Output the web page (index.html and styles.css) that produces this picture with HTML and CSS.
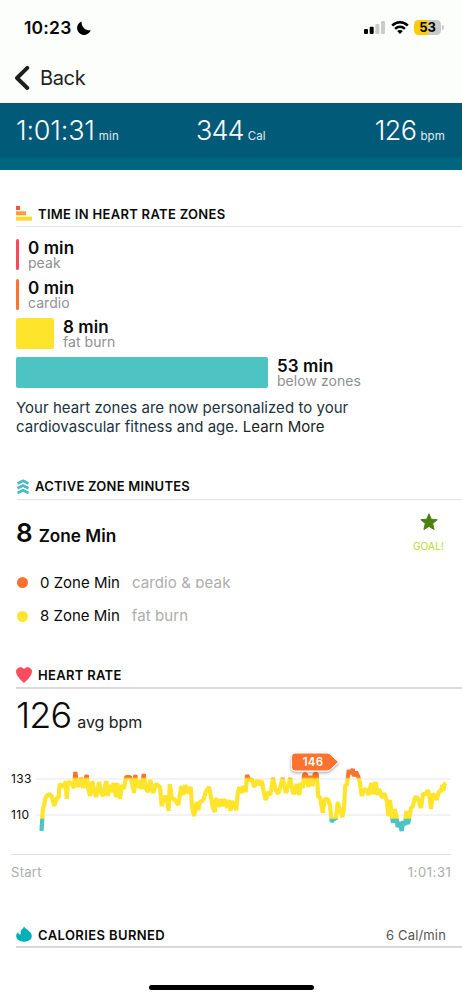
FILE: index.html
```html
<!DOCTYPE html>
<html lang="en">
<head>
<meta charset="utf-8">
<title>Workout summary</title>
<link rel="stylesheet" href="styles.css">
</head>
<body>
<header class="status">
  <span class="clock">10:23</span>
  <svg class="moon" width="14" height="14" viewBox="0 0 14 14"><path d="M4.600.4A7 7 0 1 0 13.700 9.200C10 10.200 4 6.800 4.600.4Z"/></svg>
  <div class="indicators">
    <svg width="21" height="13" viewBox="0 0 21 13"><rect y="8" width="4" height="5" rx="1"/><rect x="5.7" y="5.7" width="4" height="7.3" rx="1"/><g fill="#c9cac9"><rect x="11.4" y="3" width="4" height="10" rx="1"/><rect x="17" width="4" height="13" rx="1"/></g></svg>
    <svg class="wifi" width="18" height="13" viewBox="0 0 18 13"><path d="M1.2 4.6C5.6.2 12.4.2 16.8 4.6M4.1 7.8c2.8-2.7 7-2.7 9.8 0" fill="none" stroke="#000" stroke-width="2.500"/><path d="m6.1 10.1c1.7-1.5 4.1-1.5 5.8 0L9 13Z"/></svg>
    <div class="battery">53</div><i class="battery-tip"></i>
  </div>
</header>
<nav class="nav">
  <svg width="16" height="26" viewBox="0 0 16 26"><path d="M13.300 2.800 3 13l10.300 10" fill="none" stroke="#1c1f1e" stroke-width="3.900" stroke-linecap="round" stroke-linejoin="round"/></svg>
  <span>Back</span>
</nav>
<div class="hero">
  <div><b class="time">1:01:31</b><small>min</small></div>
  <div class="mid"><b>344</b><small>Cal</small></div>
  <div class="end"><b>126</b><small>bpm</small></div>
</div>
<main>
  <section class="zones">
    <h2><svg width="16" height="15" viewBox="0 0 16 15"><path fill="#f9523d" d="M0 0h4v4H0z"/><path fill="#fb9d34" d="M0 5.3h10v4H0z"/><path fill="#fdd835" d="M0 10.7h16v4H0z"/></svg><span class="t-zones">TIME IN HEART RATE ZONES</span></h2>
    <div class="bars">
      <div class="row first"><i class="bar peak"></i><div><strong>0 min</strong><em>peak</em></div></div>
      <div class="row"><i class="bar cardio"></i><div><strong>0 min</strong><em>cardio</em></div></div>
      <div class="row"><i class="bar fat"></i><div><strong>8 min</strong><em>fat burn</em></div></div>
      <div class="row"><i class="bar below"></i><div><strong>53 min</strong><em>below zones</em></div></div>
    </div>
    <p>Your heart zones are now personalized to your<br>cardiovascular fitness and age. <a>Learn More</a></p>
  </section>
  <section class="azm">
    <h2><svg width="12" height="16" viewBox="0 0 12 16"><path d="M.5 4.600 6 1.800l5.500 2.800M.5 9.300 6 6.500l5.500 2.800M.5 14 6 11.200l5.500 2.800" fill="none" stroke="#4eb9bf" stroke-width="2.700" stroke-linejoin="round"/></svg><span class="t-azm">ACTIVE ZONE MINUTES</span></h2>
    <div class="summary">
      <div class="total"><b>8</b><span>Zone Min</span></div>
      <div class="goal"><svg width="18" height="18" viewBox="0 0 18 18"><path d="m9 .8 2.3 5.400 5.900.5-4.500 3.900 1.400 5.900L9 13.400l-5.100 3.100 1.400-5.900L.8 6.700l5.900-.5Z" fill="#4c800f" stroke="#4c800f" stroke-linejoin="round"/></svg><span>GOAL!</span></div>
    </div>
    <div class="legend"><i class="orange"></i><span>0 Zone Min</span><em class="clip">cardio &amp; peak</em></div>
    <div class="legend"><i class="yellow"></i><span>8 Zone Min</span><em>fat burn</em></div>
  </section>
  <section class="hr">
    <h2><svg width="16" height="16" viewBox="0 0 16 16"><path d="M8 16C6.500 14.500 0 9.500 0 4.600 0 .5 5.700-1.300 8 2.200 10.300-1.300 16 .5 16 4.600 16 9.500 9.500 14.500 8 16Z" fill="#fc4c62"/></svg><span class="t-hr">HEART RATE</span></h2>
    <div class="avg"><b>126</b><span>avg bpm</span></div>
    <div class="chart">
      <div class="ylabels"><span>133</span><span>110</span></div>
      <svg width="427" height="110" viewBox="35 745 427 110">
        <defs>
          <linearGradient id="zone" gradientUnits="userSpaceOnUse" x1="0" y1="760" x2="0" y2="840"><stop offset="0" stop-color="#ff732d"/><stop offset=".2125" stop-color="#ff732d"/><stop offset=".2375" stop-color="#fee52c"/><stop offset=".725" stop-color="#fee52c"/><stop offset=".745" stop-color="#4ec3c4"/><stop offset="1" stop-color="#4ec3c4"/></linearGradient>
          <filter id="lift" x="-20%" y="-30%" width="140%" height="180%"><feDropShadow dx="0" dy="1.500" stdDeviation="1.500" flood-opacity=".35"/></filter>
        </defs>
        <path d="M36 779H451M36 815H451" stroke="#f0f0f0" stroke-width="1.300"/>
        <polyline fill="none" stroke="url(#zone)" stroke-width="4.200" stroke-linejoin="bevel" points="41.500,831 43,808 44.300,805 45,799 46.700,796 49.300,794 52,797 54.300,806 56.700,798 58.700,797 59.700,784 64,787 65.700,781 66.700,799 68,782 71.700,783 74,788 75.300,772 77,786 79,785 81,778 83.300,788 86.700,775 88.300,789 90,796 92.300,781 94,790 96.300,797 99,782 101,792 103,796 106.300,781 107.700,796 109,785 111.700,792 113.500,783 116,797 117.300,783 120,799 122,785 124,789 126,777 130,777 132,782 134,793 135.300,775 137.300,788 140,780 141.700,789 143.700,774 145.700,788 147.700,792 150.300,780 153,793 156,784 160,787 161.700,806 164,797 166.500,797 168.700,811 169.700,784 172,798 175,800 178.300,805 181.300,786 183.300,795 185.300,785 187.300,793 190.700,787 192,807 194,816 196.700,802 198.300,810 200,802 203.300,800 205.700,792 209,787 211,797 212.700,807 214.700,812 216,798 218.300,807 220.700,799 222.700,806 224.300,799 227,808 229,800 230.500,811 232,801 234,805 236.300,810 237.700,793 239.300,787 241.700,793 243.300,786 245.700,792 247,775 249.300,781 251.700,779 254.300,787 257.300,780 259.300,785 262,781 263.700,792 265.700,800 268.300,792 270.300,795 273,778 275.300,789 278.300,794 282.700,778 286,793 288,786 290.300,778 292.700,792 294.300,794 296.700,784 299.300,795 300.700,783 302.700,788 304,775 306,774 308,787 310,776 312.300,786 314.700,774 316.700,774 318.300,797 320,797 322.700,813 324.700,799 327.700,799 330,805 331.700,822 334,818 336,819 337.700,802 340,810 342.300,817 344,808 345.300,785 347,785 348.700,770 350.500,774 352.700,769 354,776 356,772 358.300,777 360,783 361.700,796 364,790 366,789 368.700,795 371.300,783 373,794 375.700,782 377.300,795 379,789 382.300,798 384.300,793 387,802 388.300,816 390,800 392,817 393,823 394.700,809 396.700,817 397.500,827 399.500,822 401.700,831 403.300,821 405.300,825 406.300,811 408,824 409.300,818 411,808 413,806 414.700,798 416.700,797 418.500,800 421,808 423.300,793 425.700,795 427.700,790 429.300,795 431,809 432.700,794 434.500,795 436.700,800 439,791 440.700,792 442.300,785 443.300,791 444.500,784 446,783"/>
        <g filter="url(#lift)"><path d="M295 753h31c3 0 4 1 5.500 2.500l7 6.500-7 6.500c-1.500 1.500-2.500 2.500-5.500 2.500h-31a3.500 3.500 0 0 1-3.500-3.500v-11A3.500 3.500 0 0 1 295 753Z" fill="#ff732d" stroke="#fff" stroke-width="1"/></g>
        <text class="pin" x="313" y="766" text-anchor="middle">146</text>
      </svg>
      <div class="xlabels"><span>Start</span><span class="x-end">1:01:31</span></div>
    </div>
  </section>
  <section class="burned">
    <h2><svg width="16" height="16" viewBox="0 0 16 16"><path d="M8 .2C8.600 2.900 15.800 5 15.800 10c0 3.600-3.400 5.700-7.600 5.700C3.400 15.700.2 13.500.2 9.800.2 7.800 1.100 6.800 2.300 6c-.2 1.500.5 2.600 1.900 2.400C5 8.200 4.700 7 4.600 6 4.400 4.200 7.300 2.800 8 .2Z" fill="#00b0b9"/></svg><span class="t-cal">CALORIES BURNED</span><small>6 Cal/min</small></h2>
  </section>
</main>
<div class="home"></div>
</body>
</html>
```
FILE: styles.css
```css
* { box-sizing: border-box; }
body { margin: 0; width: 462px; height: 999px; overflow: hidden; background: #fff; color: #0a0a0a; font-family: Inter, "Liberation Sans", sans-serif; display: flex; flex-direction: column; }
svg { display: block; flex: none; }
i, em { font-style: normal; }
.status { height: 55px; flex: none; background: #fcfefc; display: flex; align-items: center; padding-left: 24px; }
.clock { font-size: 17.500px; font-weight: 600; width: 53px; letter-spacing: .2px; }
.indicators { margin-left: 273px; display: flex; align-items: center; }
.wifi { margin: 0 5px 0 6px; }
.battery { width: 27px; height: 15px; border-radius: 4.500px; background: linear-gradient(90deg, #ffcc02 53%, #c9cac9 53%); color: #000; font-size: 13px; font-weight: 700; line-height: 15px; text-align: center; }
.battery-tip { width: 2px; height: 5px; margin-left: 1px; border-radius: 0 2px 2px 0; background: #c9cac9; }
.nav { height: 48px; flex: none; background: #fcfefc; display: flex; align-items: center; padding: 0 0 3px 14px; font-size: 20px; color: #222; }
.nav span { margin-left: 10px; letter-spacing: -.35px; }
.hero { height: 67px; flex: none; background: linear-gradient(#005a78 55px, #00657e 55px); color: #fff; display: grid; grid-template-columns: 180px 1fr auto; padding: 10px 17px 0 16px; }
.hero div { display: flex; align-items: baseline; height: 34px; }
.hero b { font-size: 27px; line-height: 36px; font-weight: 350; letter-spacing: -.9px; }
.hero .time { letter-spacing: -.2px; }
.hero .end b { letter-spacing: -.6px; }
.hero small { font-size: 11.500px; margin-left: 4px; letter-spacing: .15px; color: #e1edf1; }
h2 { margin: 0; height: 26px; display: flex; align-items: center; border-bottom: 1px solid #e2e2e2; font-size: 13px; line-height: 16px; font-weight: 600; white-space: nowrap; }
h2 span { margin: 0 0 0 6px; letter-spacing: .3px; }
section { padding-left: 16px; }
.zones { padding-top: 31px; height: 273px; }
.row { display: flex; height: 31px; margin-bottom: 8px; }
.row.first { margin-bottom: 9px; }
.bars { padding-top: 12px; height: 170px; }
.row > div { margin-left: 9px; padding-top: 1px; }
.row strong { display: block; font-size: 17px; font-weight: 600; line-height: 17px; letter-spacing: .1px; }
.row em { display: block; margin-top: -1px; font-size: 14px; line-height: 13px; letter-spacing: .05px; color: #909090; }
.bar { display: block; height: 31px; border-radius: 2px; }
.peak { width: 3px; background: #fa465f; }
.cardio { width: 3px; background: #ff732d; }
.fat { width: 38px; background: #fee52c; }
.below { width: 252px; background: #4ec3c4; }
p { margin: 1px 0 0; font-size: 15px; line-height: 19px; letter-spacing: .04px; color: #213440; white-space: nowrap; }
p a { color: #222; }
.azm { padding-top: 31px; height: 189px; }
.azm h2 { margin-left: 1px; }
.azm h2 span { margin: -1px 0 0 6px; letter-spacing: .25px; }
.summary { display: flex; justify-content: space-between; height: 66px; padding-right: 17px; }
.total { display: flex; align-items: baseline; padding-top: 15px; height: 50px; }
.total b { font-size: 26px; font-weight: 600; line-height: 36px; }
.total span { font-size: 17.200px; font-weight: 600; margin-left: 6px; }
.goal { display: flex; flex-direction: column; align-items: center; padding-top: 13px; width: 33px; }
.goal span { font-size: 10px; line-height: 12px; margin-top: 9px; letter-spacing: .2px; color: #b0dd20; }
.legend { display: flex; align-items: center; height: 33.500px; font-size: 15px; line-height: 20px; white-space: nowrap; }
.legend i { width: 11px; height: 11px; border-radius: 50%; margin: 0 12px 0 1px; }
.legend em { margin-left: 12px; letter-spacing: .1px; color: #adadad; }
.orange { background: #ff732d; }
.yellow { background: #fee52c; }
.clip { height: 14px; line-height: 18px; margin-top: -3px; overflow: hidden; }
.hr { padding-top: 31px; height: 260px; }
.hr h2, .burned h2 { border-bottom: 2px solid #d9d9d9; }
.hr h2 span { margin-top: 0; }
.avg { display: flex; align-items: baseline; height: 56px; padding-top: 3px; }
.avg b { font-size: 36px; line-height: 46px; font-weight: 300; letter-spacing: -.9px; }
.avg span { font-size: 16px; margin-left: 6px; font-weight: 400; letter-spacing: -.05px; color: #222; }
.chart { display: grid; grid-template-columns: 30px 416px; grid-template-rows: 110px 35px; margin-left: -11px; }
.chart svg { overflow: visible; }
.ylabels { padding-top: 25px; }
.ylabels span { display: block; height: 36px; font-size: 12px; line-height: 18px; margin-left: 6px; letter-spacing: .35px; }
.pin { fill: #fff; font: 600 11.500px Inter, sans-serif; letter-spacing: .2px; }
.xlabels { grid-column: 1 / 3; margin: -1px 0 0 6px; width: 440px; border-top: 1px solid #e0e0e0; padding-top: 8px; display: flex; justify-content: space-between; font-size: 13px; line-height: 18px; letter-spacing: .3px; color: #adadad; }
.x-end { letter-spacing: .6px; margin-right: -.5px; }
.burned { margin-top: 30px; }
.burned h2 span { margin-top: 1px; letter-spacing: .4px; }
.burned small { margin: 1px 16px 0 auto; font-size: 13px; font-weight: 400; letter-spacing: .15px; color: #555; }
.home { position: absolute; left: 149px; top: 985px; width: 165px; height: 5px; border-radius: 3px; background: #000; }
```
